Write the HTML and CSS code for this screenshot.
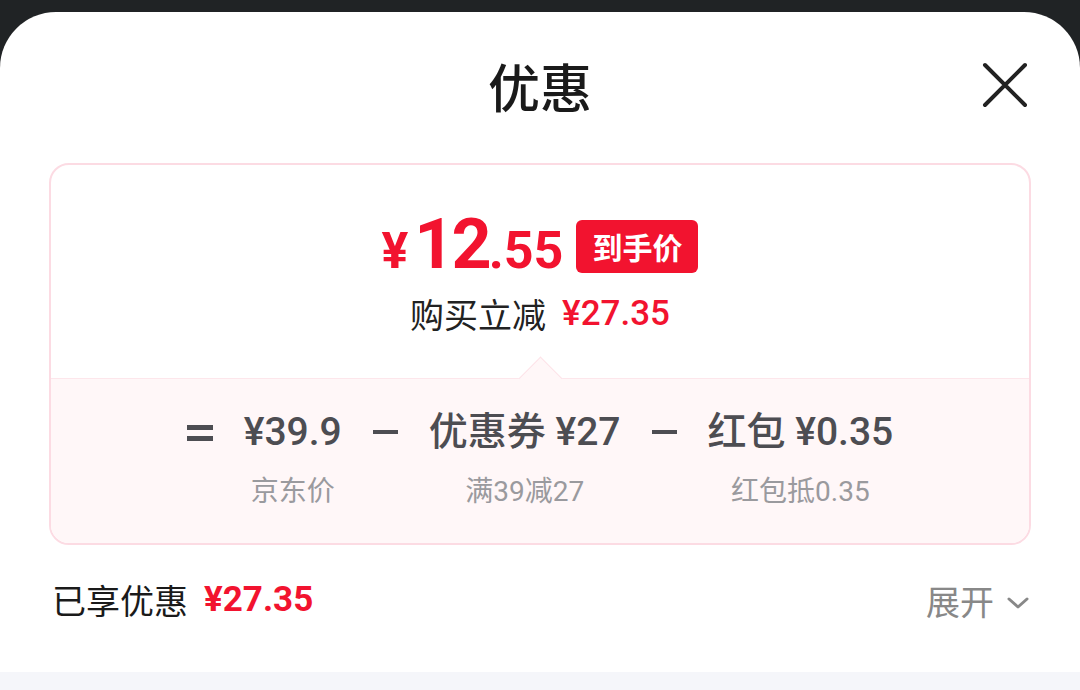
FILE: index.html
```html
<!DOCTYPE html>
<html lang="zh-CN">
<head>
  <meta charset="UTF-8">
  <title>优惠</title>
  <link rel="stylesheet" href="styles.css">
</head>
<body>
  <div class="sheet">
    <header class="head">
      <span></span>
      <h1 class="title">优惠</h1>
      <button class="close" type="button" aria-label="关闭">
        <svg width="46" height="46" viewBox="0 0 46 46">
          <path d="M3 3 L43 43 M43 3 L3 43" stroke="#222" stroke-width="4" stroke-linecap="round" fill="none"/>
        </svg>
      </button>
    </header>

    <section class="card">
      <div class="card-top">
        <div class="final">
          <span class="price"><span class="yen">¥</span><span class="int">12</span><span class="dec">.55</span></span>
          <span class="tag">到手价</span>
        </div>
        <div class="save">购买立减<span class="red">¥27.35</span></div>
      </div>
      <div class="card-bottom">
        <div class="formula">
          <div class="term"><div class="val"><span class="eq"></span></div></div>
          <div class="term">
            <div class="val">¥39.9</div>
            <div class="label">京东价</div>
          </div>
          <div class="term"><div class="val"><span class="minus"></span></div></div>
          <div class="term">
            <div class="val">优惠券 ¥27</div>
            <div class="label">满39减27</div>
          </div>
          <div class="term"><div class="val"><span class="minus"></span></div></div>
          <div class="term">
            <div class="val">红包 ¥0.35</div>
            <div class="label">红包抵0.35</div>
          </div>
        </div>
      </div>
    </section>

    <div class="total">
      <div class="enjoyed">已享优惠<span class="red">¥27.35</span></div>
      <div class="expand">展开
        <svg width="24" height="16" viewBox="0 0 24 16">
          <polyline points="3,4 12,12 21,4" stroke="#888" stroke-width="3" fill="none" stroke-linecap="round" stroke-linejoin="round"/>
        </svg>
      </div>
    </div>
  </div>
  <div class="strip"></div>
</body>
</html>
```

FILE: styles.css
```css
body {
  margin: 0;
  background: #202325;
  font-family: Roboto, "Noto Sans CJK SC", sans-serif;
  color: #1a1a1a;
}
.sheet {
  margin-top: 12px;
  height: 660px;
  background: #fff;
  border-radius: 56px 56px 0 0;
  display: flex;
  flex-direction: column;
}
.head {
  display: grid;
  grid-template-columns: 1fr auto 1fr;
  align-items: center;
  padding: 40px 52px 0;
  height: 73px;
}
.title {
  margin: 0;
  font-family: "Noto Sans CJK SC", sans-serif;
  font-size: 52px;
  font-weight: 500;
  line-height: 70px;
  margin-top: -6px;
}
.close {
  justify-self: end;
  margin-top: -8px;
  padding: 0;
  border: none;
  background: none;
  display: flex;
}
.card {
  margin: 38px 49px 0;
  border: 2px solid #fcdbe3;
  border-radius: 20px;
  overflow: hidden;
}
.card-top {
  height: 213px;
  display: flex;
  flex-direction: column;
  align-items: center;
}
.final {
  margin-top: 46px;
  height: 72px;
  display: flex;
  align-items: center;
  gap: 13px;
}
.price {
  color: #f2132f;
  font-weight: 700;
  line-height: 72px;
  display: flex;
  align-items: baseline;
}
.yen {
  font-size: 50px;
  margin-right: 6px;
}
.int {
  font-size: 70px;
  letter-spacing: -3px;
}
.dec {
  font-size: 52px;
}
.tag {
  background: #f2132f;
  color: #fff;
  font-family: "Noto Sans CJK SC", sans-serif;
  font-size: 30px;
  font-weight: 700;
  line-height: 53px;
  padding: 0 16px;
  border-radius: 6px;
  margin-top: -2px;
}
.save {
  margin-top: 9px;
  font-family: "Noto Sans CJK SC", sans-serif;
  font-size: 34px;
  line-height: 44px;
  color: #222;
  display: flex;
  align-items: center;
  gap: 16px;
}
.red {
  color: #f2132f;
  font-family: Roboto, "Noto Sans CJK SC", sans-serif;
  font-weight: 500;
  font-size: 35px;
}
.card-bottom {
  position: relative;
  background: #fff7f8;
  border-top: 1px solid #fde6eb;
  padding: 28px 0 31px;
}
.card-bottom::before {
  content: "";
  position: absolute;
  left: calc(50% - 15px);
  top: -16px;
  width: 30px;
  height: 30px;
  background: #fff7f8;
  border-top: 1px solid #fde3e9;
  border-left: 1px solid #fde3e9;
  transform: rotate(45deg);
}
.formula {
  display: flex;
  justify-content: center;
  gap: 31px;
}
.term {
  display: flex;
  flex-direction: column;
  align-items: center;
}
.val {
  font-family: Roboto, "Noto Sans CJK SC", sans-serif;
  font-size: 39px;
  font-weight: 500;
  line-height: 50px;
  height: 50px;
  color: #4d4d52;
  white-space: nowrap;
  display: flex;
  align-items: center;
}
.eq {
  width: 26px;
  height: 6px;
  border-top: 5px solid #4d4d52;
  border-bottom: 5px solid #4d4d52;
  margin-top: 2px;
}
.minus {
  width: 25px;
  height: 4px;
  background: #4d4d52;
}
.label {
  margin-top: 15px;
  font-family: Roboto, "Noto Sans CJK SC", sans-serif;
  font-size: 28px;
  line-height: 40px;
  color: #9a9a9e;
  white-space: nowrap;
}
.total {
  margin-top: 30px;
  padding: 0 50px 0 52px;
  height: 50px;
  display: flex;
  align-items: center;
  justify-content: space-between;
}
.enjoyed {
  font-family: "Noto Sans CJK SC", sans-serif;
  font-size: 34px;
  line-height: 50px;
  color: #1a1a1a;
  display: flex;
  align-items: center;
  gap: 16px;
}
.enjoyed .red {
  font-weight: 700;
}
.expand {
  font-family: "Noto Sans CJK SC", sans-serif;
  font-size: 34px;
  color: #888;
  display: flex;
  align-items: center;
  gap: 12px;
}
.expand svg {
  margin-top: 6px;
}
.strip {
  height: 18px;
  background: #f5f6fa;
}
```
